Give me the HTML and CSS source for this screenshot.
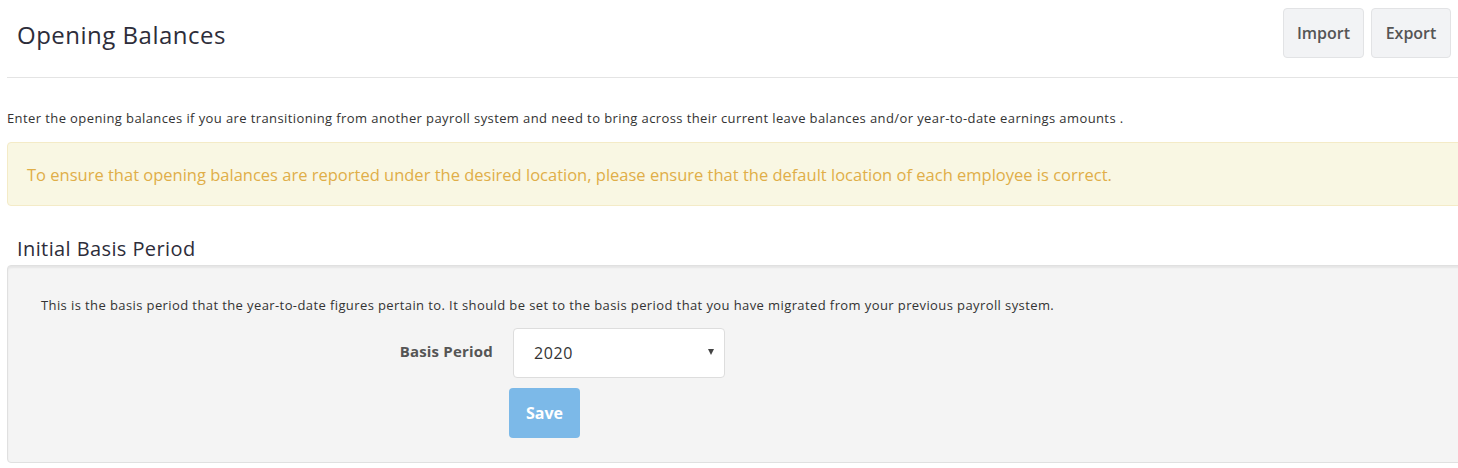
FILE: index.html
```html
<!DOCTYPE html>
<html>
<head>
<meta charset="utf-8">
<link rel="stylesheet" href="styles.css">
</head>
<body>
<div class="page">
  <div class="header">
    <h1 class="title">Opening Balances</h1>
    <div class="actions">
      <button class="btn">Import</button>
      <button class="btn">Export</button>
    </div>
  </div>
  <p class="intro">Enter the opening balances if you are transitioning from another payroll system and need to bring across their current leave balances and/or year-to-date earnings amounts .</p>
  <div class="alert">To ensure that opening balances are reported under the desired location, please ensure that the default location of each employee is correct.</div>
  <h2 class="section-title">Initial Basis Period</h2>
  <div class="panel">
    <p class="panel-text">This is the basis period that the year-to-date figures pertain to. It should be set to the basis period that you have migrated from your previous payroll system.</p>
    <div class="form-row">
      <label class="label">Basis Period</label>
      <div class="select"><span>2020</span><span class="caret"></span></div>
    </div>
    <div class="form-row">
      <div class="label-spacer"></div>
      <button class="save">Save</button>
    </div>
  </div>
</div>
</body>
</html>
```
FILE: styles.css
```css
html, body {
  margin: 0;
  padding: 0;
  background: #fff;
  overflow: hidden;
}
body {
  font-family: "Open Sans", "Lato", sans-serif;
  color: #333;
}
.page {
  margin-left: 7px;
  width: 1460px;
}
.header {
  display: flex;
  justify-content: space-between;
  align-items: flex-start;
  height: 78px;
  border-bottom: 1px solid #e4e4e4;
  box-sizing: border-box;
  padding-top: 8px;
  padding-left: 10px;
}
.title {
  margin: 11px 0 0 0;
  font-size: 24px;
  font-weight: 400;
  letter-spacing: 0.5px;
  color: #2d2d3a;
  line-height: 32px;
}
.actions {
  display: flex;
  gap: 7px;
  margin-right: 16px;
}
.btn {
  font-family: inherit;
  font-size: 16px;
  font-weight: 600;
  color: #555;
  background: #f2f3f5;
  border: 1px solid #e2e3e5;
  border-radius: 4px;
  height: 50px;
  width: 81px;
  padding: 0;
}
.btn + .btn {
  width: 80px;
}
.intro {
  margin: 31px 0 0 0;
  font-size: 13px;
  letter-spacing: 0.4px;
  line-height: 18px;
  color: #333;
}
.alert {
  margin-top: 15px;
  height: 64px;
  box-sizing: border-box;
  background: #f9f7e3;
  border: 1px solid #f4ebc7;
  border-radius: 4px;
  color: #e0ae48;
  font-size: 16.5px;
  padding: 0 19px;
  display: flex;
  align-items: center;
}
.section-title {
  margin: 30px 0 0 10px;
  font-size: 20px;
  letter-spacing: 0.4px;
  font-weight: 400;
  color: #2d2d3a;
  line-height: 26px;
}
.panel {
  margin-top: 3px;
  background: #f4f4f4;
  border: 1px solid #e0e0e0;
  border-radius: 4px;
  box-shadow: inset 0 2px 2px rgba(0,0,0,0.06);
  height: 198px;
  box-sizing: border-box;
  padding: 30px 0 0 33px;
}
.panel-text {
  margin: 0;
  font-size: 13px;
  letter-spacing: 0.4px;
  line-height: 18px;
  color: #333;
}
.form-row {
  display: flex;
  align-items: flex-start;
}
.label {
  width: 472px;
  text-align: right;
  font-size: 15px;
  font-weight: 700;
  letter-spacing: 0.2px;
  color: #555;
  padding-top: 13px;
  padding-right: 20px;
  box-sizing: border-box;
}
.panel-text + .form-row {
  margin-top: 14px;
}
.select {
  width: 212px;
  height: 50px;
  box-sizing: border-box;
  background: #fff;
  border: 1px solid #ddd;
  border-radius: 4px;
  display: flex;
  align-items: center;
  justify-content: space-between;
  padding: 0 10px 0 20px;
  font-size: 16px;
  letter-spacing: 0.6px;
  color: #333;
}
.caret {
  width: 0;
  height: 0;
  border-left: 3.5px solid transparent;
  border-right: 3.5px solid transparent;
  border-top: 6px solid #444;
  margin-top: -2px;
}
.label-spacer {
  width: 468px;
}
.save {
  margin-top: 10px;
  width: 71px;
  height: 50px;
  background: #7cb9e8;
  color: #fff;
  border: none;
  border-radius: 4px;
  font-family: inherit;
  font-size: 16px;
  font-weight: 700;
}
```
